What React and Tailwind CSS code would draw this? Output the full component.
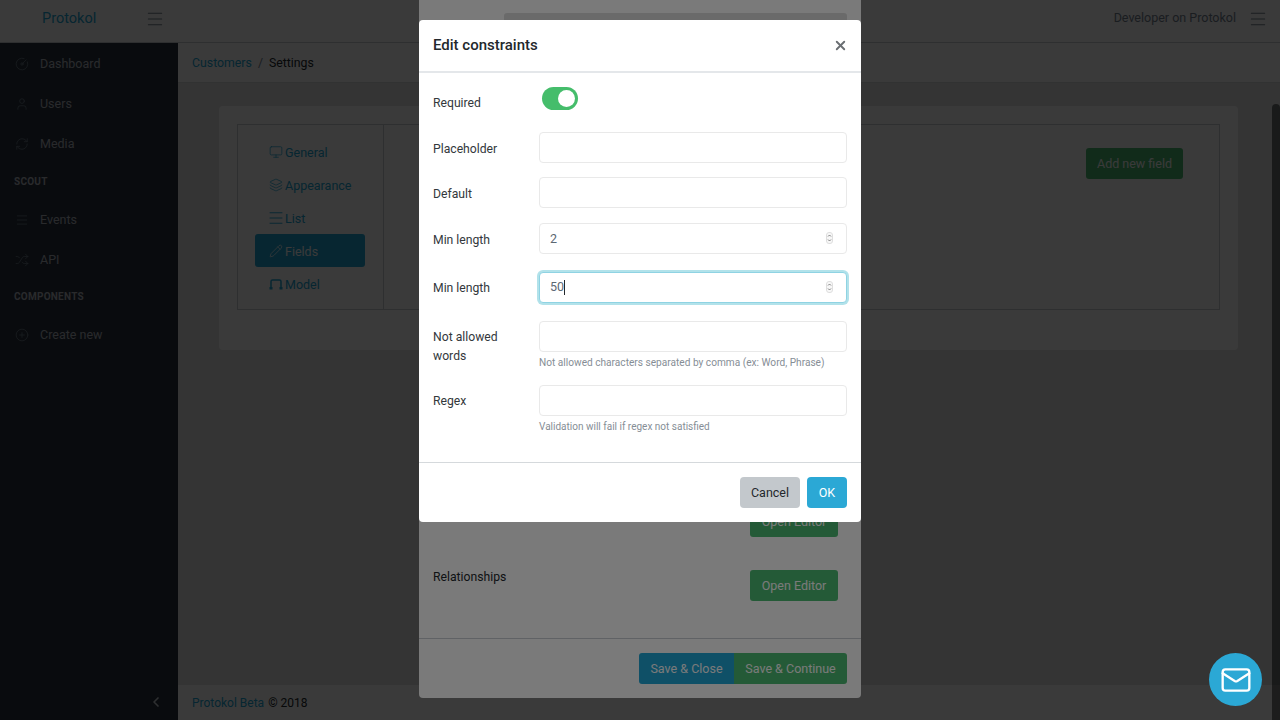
import { useState } from 'react';
import {
  CircleGauge, User, RefreshCw, Menu, Shuffle, CirclePlus,
  Monitor, Layers, Pencil, ChevronLeft, Mail, X
} from 'lucide-react';

const font = { fontFamily: 'Roboto, "Noto Sans", sans-serif' };

function ModelIcon({ className }) {
  return (
    <svg width="14" height="14" viewBox="0 0 14 14" fill="none" stroke="currentColor" className={className}>
      <path d="M2 10V4.500C2 3.500 2.600 3 3.500 3h7c.9 0 1.500.5 1.500 1.500V10" strokeWidth="1.500" />
      <path d="M.5 10h3v2.500h-3zM10.500 10h3v2.500h-3z" fill="currentColor" stroke="none" />
    </svg>
  );
}

const sideTop = [
  { icon: CircleGauge, label: 'Dashboard' },
  { icon: User, label: 'Users' },
  { icon: RefreshCw, label: 'Media' },
];

const tabs = [
  { icon: Monitor, label: 'General', size: 14, iconClass: 'mr-[2px]' },
  { icon: Layers, label: 'Appearance', size: 14, iconClass: 'mr-[2px]' },
  { icon: Menu, label: 'List', size: 18, iconClass: '-ml-[2px]' },
  { icon: Pencil, label: 'Fields', size: 14, iconClass: 'mr-[2px]', active: true },
  { icon: ModelIcon, label: 'Model', size: 14, iconClass: 'mr-[2px]' },
];

function SideItem({ icon: Icon, label }) {
  return (
    <div className="flex items-center h-10 pl-[15px] text-[12.5px] text-[#b4bac0]">
      <Icon size={14} strokeWidth={1.25} className="text-[#73818f] mr-[11px]" />
      {label}
    </div>
  );
}

function SideTitle({ children, className }) {
  return (
    <div className={`pl-[14px] text-[10px] font-bold tracking-wide text-[#b4bac0] ${className}`}>
      {children}
    </div>
  );
}

function Page() {
  return (
    <div className="h-[720px] flex flex-col bg-[#e4e5e6]">
      <header className="h-[43px] shrink-0 flex items-center pb-[5px] bg-white border-b border-[#c8ced3]">
        <div className="w-[178px] flex items-center">
          <span className="ml-[42px] text-[14.5px] text-[#20a8d8]">Protokol</span>
          <Menu size={20} strokeWidth={1.25} className="ml-[49px] text-[#73818f]" />
        </div>
        <div className="ml-auto flex items-center pr-[12px]">
          <span className="text-[12.5px] text-[#73818f]">Developer on Protokol</span>
          <Menu size={20} strokeWidth={1.25} className="ml-[12px] text-[#73818f]" />
        </div>
      </header>
      <div className="flex-1 flex min-h-0">
        <aside className="w-[178px] shrink-0 bg-[#2a3440] flex flex-col relative">
          <div className="pt-[1px]">
            {sideTop.map(i => <SideItem key={i.label} {...i} />)}
          </div>
          <SideTitle className="mt-[10px] mb-[11px]">SCOUT</SideTitle>
          <SideItem icon={Menu} label="Events" />
          <SideItem icon={Shuffle} label="API" />
          <SideTitle className="mt-[9px] mb-[11px]">COMPONENTS</SideTitle>
          <SideItem icon={CirclePlus} label="Create new" />
          <ChevronLeft size={16} strokeWidth={2.5} className="absolute left-[148px] bottom-[10px] text-[#c8ced3]" />
        </aside>
        <main className="flex-1 flex flex-col min-w-0">
          <div className="h-[40px] shrink-0 flex items-center pl-[14px] pt-[2px] bg-white border-b border-[#d8dbde] text-[12.3px]">
            <span className="text-[#20a8d8]">Customers</span>
            <span className="mx-[6px] text-[#73818f]">/</span>
            <span className="text-[#23282c]">Settings</span>
          </div>
          <div className="flex-1 pt-[23px] pl-[41px] pr-[42px]">
            <div className="h-[244px] bg-white rounded-sm px-[18px] pt-[18px]">
              <div className="h-[186px] flex border border-[#c8ced3]">
                <div className="w-[146px] shrink-0 border-r border-[#c8ced3] pl-[17px] pr-[18px] pt-[10px] text-[12.5px]">
                  {tabs.map(t => (
                    <div
                      key={t.label}
                      className={`h-[33px] flex items-center pl-[14px] rounded-[3px] ${t.active ? 'bg-[#20a8d8] text-white' : 'text-[#20a8d8]'}`}
                    >
                      <t.icon size={t.size} strokeWidth={1.25} className={t.iconClass} />
                      <span className="mt-[4px]">{t.label}</span>
                    </div>
                  ))}
                </div>
                <div className="flex-1 flex justify-end items-start pt-[23px] pr-[36px]">
                  <div className="h-[31px] w-[97px] pt-[2px] flex items-center justify-center rounded-[3px] bg-[#4dbd74] text-white text-[12.5px]">
                    Add new field
                  </div>
                </div>
              </div>
            </div>
          </div>
          <footer className="h-[36px] shrink-0 flex items-center pl-[14px] bg-white border-t border-[#e4e5e6] text-[12px] text-[#23282c]">
            <span className="text-[#20a8d8]">Protokol Beta</span>
            <span className="ml-[4px]">© 2018</span>
          </footer>
        </main>
      </div>
    </div>
  );
}

function OuterModal() {
  return (
    <div className="absolute left-[419px] top-[-100px] w-[442px] h-[798px] bg-white rounded-[4px] flex flex-col">
      <div className="absolute left-[85px] top-[113px] w-[343px] h-[31px] bg-[#dedede] rounded-[3px]" />
      <div className="flex-1 relative">
        <div className="absolute right-[23px] top-[606px] w-[88px] h-[31px] pt-[2px] rounded-[3px] bg-[#4dbd74] flex items-center justify-center text-white text-[12.5px]">
          Open Editor
        </div>
        <div className="absolute left-[14px] top-[668px] text-[12.2px] text-[#23282c]">Relationships</div>
        <div className="absolute right-[23px] top-[670px] w-[88px] h-[31px] pt-[2px] rounded-[3px] bg-[#4dbd74] flex items-center justify-center text-white text-[12.5px]">
          Open Editor
        </div>
      </div>
      <div className="h-[60px] shrink-0 border-t border-[#c8ced3] flex justify-end items-start pt-[14px] pr-[14px] text-[12.5px] text-white">
        <div className="h-[31px] w-[95px] pt-[1px] flex items-center justify-center rounded-l-[3px] bg-[#20a8d8]">Save &amp; Close</div>
        <div className="h-[31px] w-[113px] pt-[1px] flex items-center justify-center rounded-r-[3px] bg-[#4dbd74]">Save &amp; Continue</div>
      </div>
    </div>
  );
}

function Spinner() {
  return (
    <svg width="7" height="12" viewBox="0 0 7 12" className="absolute right-[13px] top-[8px]">
      <rect x="0.5" y="0.5" width="6" height="11" rx="2.5" fill="#f7f7f7" stroke="#dedede" />
      <path d="M2 4.500 3.500 3 5 4.500M2 7.500 3.500 9 5 7.500" fill="none" stroke="#666" strokeWidth="0.8" />
    </svg>
  );
}

function Row({ label, lower, className = '', children }) {
  return (
    <div className={`flex ${className}`}>
      <div className={`w-[106px] shrink-0 text-[12.2px] leading-[19px] text-[#33383c] ${lower ? 'pt-[8px]' : 'pt-[7px]'}`}>{label}</div>
      <div className="flex-1">{children}</div>
    </div>
  );
}

function TextField() {
  return <input type="text" readOnly className="block w-full h-[31px] bg-white border border-[#e9e9e9] rounded-[4px] outline-none" />;
}

function NumberField({ value, focused }) {
  return (
    <div
      className={`relative h-[31px] flex items-center pl-[10px] bg-white rounded-[4px] text-[12.5px] text-[#5c6873] border ${focused ? 'border-[#8fd3e3] shadow-[0_0_0_2px_#b2e2ea]' : 'pt-[2px] border-[#e9e9e9]'}`}
    >
      {value}
      {focused && <span className="w-px h-[15px] bg-[#23282c]" />}
      <Spinner />
    </div>
  );
}

function Toggle({ checked, onChange }) {
  return (
    <button
      type="button"
      onClick={() => onChange(!checked)}
      className={`ml-[3px] block w-[36px] h-[23px] rounded-full p-[3px] ${checked ? 'bg-[#45bd6b]' : 'bg-[#c8ced3]'}`}
    >
      <span className={`block w-[17px] h-[17px] rounded-full bg-white ${checked ? 'ml-auto' : ''}`} />
    </button>
  );
}

function ConstraintsModal() {
  const [required, setRequired] = useState(true);
  return (
    <div className="absolute left-[419px] top-[20px] w-[442px] h-[502px] bg-white rounded-[4px] flex flex-col">
      <div className="h-[53px] shrink-0 flex items-center justify-between pl-[14px] pr-[13px] border-b-2 border-[#e4e7ea]">
        <h5 className="text-[15px] font-medium text-[#23282c]">Edit constraints</h5>
        <X size={15} strokeWidth={3} className="text-[#6a6e72]" />
      </div>
      <div className="flex-1 px-[14px] pt-[14px]">
        <Row label="Required" className="h-[45px]">
          <Toggle checked={required} onChange={setRequired} />
        </Row>
        <Row label="Placeholder" lower className="h-[45px]"><TextField /></Row>
        <Row label="Default" lower className="h-[46px]"><TextField /></Row>
        <Row label="Min length" lower className="h-[49px]"><NumberField value="2" /></Row>
        <Row label="Min length" className="h-[49px]"><NumberField value="50" focused /></Row>
        <Row label={<>Not allowed<br />words</>} className="h-[64px]">
          <TextField />
          <div className="mt-[3px] text-[10.15px] text-[#868e96]">Not allowed characters separated by comma (ex: Word, Phrase)</div>
        </Row>
        <Row label="Regex">
          <TextField />
          <div className="mt-[3px] text-[10px] text-[#868e96]">Validation will fail if regex not satisfied</div>
        </Row>
      </div>
      <div className="h-[60px] shrink-0 border-t border-[#d5d9dc] flex justify-end items-start gap-[7px] pt-[14px] pr-[14px] text-[12.5px]">
        <button type="button" className="h-[31px] w-[60px] pt-[1px] rounded-[4px] bg-[#c3c8cc] text-[#23282c]">Cancel</button>
        <button type="button" className="h-[31px] w-[40px] pt-[1px] rounded-[4px] bg-[#2ba8d5] text-white">OK</button>
      </div>
    </div>
  );
}

export default function App() {
  return (
    <div className="relative w-[1280px] h-[720px] overflow-hidden" style={font}>
      <Page />
      <div className="absolute inset-0 bg-black/[0.52]" />
      <OuterModal />
      <div className="absolute right-0 top-[104px] bottom-0 w-[8px] bg-black/50 rounded-t-sm" />
      <div className="absolute inset-0 bg-black/[0.52]" />
      <ConstraintsModal />
      <div className="absolute left-[1209px] top-[653px] w-[53px] h-[53px] rounded-full bg-[#2ba8d5] flex items-center justify-center">
        <Mail size={32} strokeWidth={1.75} className="text-white" />
      </div>
    </div>
  );
}
